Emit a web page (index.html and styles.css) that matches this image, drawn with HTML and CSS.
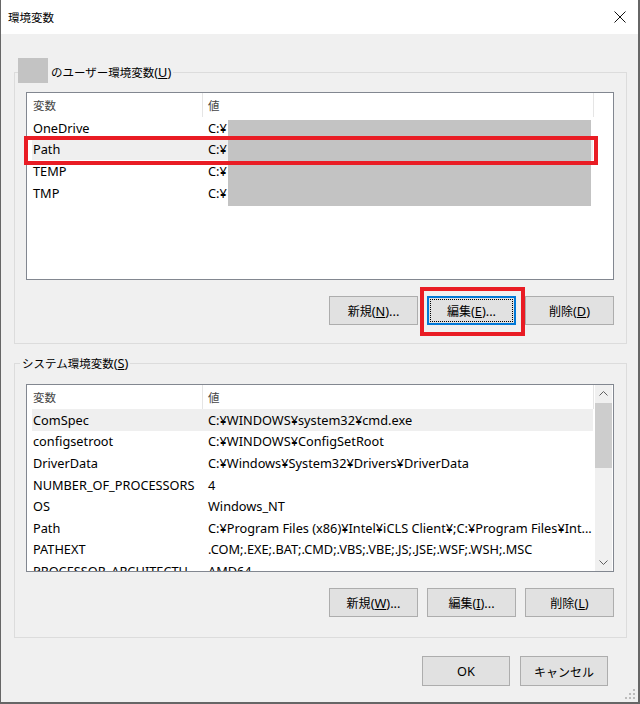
FILE: index.html
```html
<!DOCTYPE html>
<html lang="ja">
<head>
<meta charset="utf-8">
<title>環境変数</title>
<link rel="stylesheet" href="styles.css">
</head>
<body>
<div class="window">
  <div class="titlebar">
    <span class="ja title">環境変数</span>
    <svg class="close" width="12" height="12" viewBox="0 0 12 12"><path d="M0.5 0.5 L11.5 11.5 M11.5 0.5 L0.5 11.5" stroke="#111" stroke-width="1" fill="none"/></svg>
  </div>
  <div class="content">
    <fieldset class="group user">
      <legend><span class="redact-sq"></span><span class="ja">のユーザー環境変数</span>(<u>U</u>)</legend>
      <div class="list-wrap">
        <div class="list">
          <div class="list-head">
            <div class="h-name"><span class="ja">変数</span></div>
            <div class="h-val"><span class="ja">値</span></div>
          </div>
          <div class="row"><div class="c-name">OneDrive</div><div class="c-val">C:¥</div></div>
          <div class="row sel"><div class="c-name">Path</div><div class="c-val">C:¥</div></div>
          <div class="row"><div class="c-name">TEMP</div><div class="c-val">C:¥</div></div>
          <div class="row"><div class="c-name">TMP</div><div class="c-val">C:¥</div></div>
        </div>
        <div class="redact-block"></div>
        <div class="red-path"></div>
      </div>
      <div class="btns">
        <button class="btn"><span class="ja">新規</span>(<u>N</u>)...</button>
        <span class="hl-wrap"><button class="btn focus"><span class="ja">編集</span>(<u>E</u>)...</button></span>
        <button class="btn"><span class="ja">削除</span>(<u>D</u>)</button>
      </div>
    </fieldset>

    <fieldset class="group sys">
      <legend><span class="ja">システム環境変数</span>(<u>S</u>)</legend>
      <div class="list sys-list">
        <div class="main">
          <div class="list-head">
            <div class="h-name"><span class="ja">変数</span></div>
            <div class="h-val"><span class="ja">値</span></div>
          </div>
          <div class="row sel"><div class="c-name">ComSpec</div><div class="c-val">C:¥WINDOWS¥system32¥cmd.exe</div></div>
          <div class="row"><div class="c-name">configsetroot</div><div class="c-val">C:¥WINDOWS¥ConfigSetRoot</div></div>
          <div class="row"><div class="c-name">DriverData</div><div class="c-val">C:¥Windows¥System32¥Drivers¥DriverData</div></div>
          <div class="row"><div class="c-name">NUMBER_OF_PROCESSORS</div><div class="c-val">4</div></div>
          <div class="row"><div class="c-name">OS</div><div class="c-val">Windows_NT</div></div>
          <div class="row"><div class="c-name">Path</div><div class="c-val">C:¥Program Files (x86)¥Intel¥iCLS Client¥;C:¥Program Files¥Int...</div></div>
          <div class="row"><div class="c-name">PATHEXT</div><div class="c-val">.COM;.EXE;.BAT;.CMD;.VBS;.VBE;.JS;.JSE;.WSF;.WSH;.MSC</div></div>
          <div class="row"><div class="c-name">PROCESSOR_ARCHITECTU...</div><div class="c-val">AMD64</div></div>
        </div>
        <div class="scrollbar">
          <div class="sb-btn"><svg width="17" height="17" viewBox="0 0 17 17"><polyline points="4.5,10.5 8.5,6.5 12.5,10.5" stroke="#606060" stroke-width="1" fill="none"/></svg></div>
          <div class="sb-thumb"></div>
          <div class="sb-space"></div>
          <div class="sb-btn"><svg width="17" height="17" viewBox="0 0 17 17"><polyline points="4.5,6.5 8.5,10.5 12.5,6.5" stroke="#606060" stroke-width="1" fill="none"/></svg></div>
        </div>
      </div>
      <div class="btns">
        <button class="btn"><span class="ja">新規</span>(<u>W</u>)...</button>
        <button class="btn"><span class="ja">編集</span>(<u>I</u>)...</button>
        <button class="btn"><span class="ja">削除</span>(<u>L</u>)</button>
      </div>
    </fieldset>

    <div class="footer">
      <button class="btn big">OK</button>
      <button class="btn big"><span class="ja">キャンセル</span></button>
    </div>
  </div>
  <svg class="grip" width="12" height="12" viewBox="0 0 12 12">
    <rect x="8" y="0" width="2" height="2" fill="#bcbcbc"/>
    <rect x="4" y="4" width="2" height="2" fill="#bcbcbc"/>
    <rect x="8" y="4" width="2" height="2" fill="#bcbcbc"/>
    <rect x="0" y="8" width="2" height="2" fill="#bcbcbc"/>
    <rect x="4" y="8" width="2" height="2" fill="#bcbcbc"/>
    <rect x="8" y="8" width="2" height="2" fill="#bcbcbc"/>
  </svg>
</div>
</body>
</html>
```
FILE: styles.css
```css
* { box-sizing: border-box; }
html, body { margin: 0; padding: 0; }
body {
  width: 640px;
  height: 704px;
  overflow: hidden;
  font-family: "Noto Sans", "Noto Sans CJK JP", sans-serif;
  font-size: 12.75px;
  color: #000;
  background: #f0f0f0;
}
.ja {
  font-family: "Noto Sans CJK JP", sans-serif;
  font-size: 11.5px;
}
.window {
  width: 640px;
  height: 704px;
  border-left: 1px solid #666;
  border-right: 2px solid #666;
  border-bottom: 2px solid #666;
  background: #f0f0f0;
  display: flex;
  flex-direction: column;
  position: relative;
}
.titlebar {
  height: 34px;
  background: #fff;
  display: flex;
  align-items: center;
  justify-content: space-between;
  padding: 0 12px 0 7px;
}
.title { font-size: 11.5px; color: #000; }
.close { display: block; }

.content {
  padding: 24px 11px 0 13px;
}
.group {
  margin: 0;
  border: 1px solid #dcdcdc;
  min-width: 0;
}
.group.user { padding: 6px 12px 18px 11px; }
.group.sys { margin-top: 11px; padding: 13px 12px 20px 11px; }
.group legend {
  padding: 0 2px;
  line-height: 16px;
  height: 16px;
  display: flex;
  align-items: center;
  white-space: nowrap;
}
.group.user legend {
  margin-left: -8px;
  padding: 0 2px 0 0;
  height: 28px;
}
.group.sys legend { margin-left: -6px; }
.redact-sq {
  width: 30px;
  height: 25px;
  background: #c3c3c3;
  margin: 0 3px 3px 0;
}

.list-wrap { position: relative; }
.list {
  height: 188px;
  border: 1px solid #828790;
  background: #fff;
  overflow: hidden;
}
.list-head {
  height: 24px;
  display: flex;
  color: #444;
}
.h-name, .h-val {
  height: 24px;
  display: flex;
  align-items: center;
  border-right: 1px solid #e5e5e5;
}
.h-name { width: 176px; padding-left: 6px; }
.h-val { width: 391px; padding-left: 5px; }
.row {
  height: 21.6px;
  display: flex;
  align-items: center;
  margin-left: 5px;
  width: 561px;
  white-space: nowrap;
}
.row.sel { background: #efefef; }
.c-name {
  width: 171px;
  padding-left: 1px;
  padding-right: 2px;
  overflow: hidden;
  text-overflow: ellipsis;
}
.c-val {
  flex: 1;
  padding-left: 5px;
  overflow: hidden;
}
.redact-block {
  position: absolute;
  left: 202px;
  top: 28px;
  width: 363px;
  height: 86px;
  background: #c3c3c3;
}
.red-path {
  position: absolute;
  left: -2px;
  top: 44px;
  width: 574px;
  height: 29px;
  border: 4px solid #e91c24;
}

.sys-list { display: flex; }
.sys-list .main { width: 568px; overflow: hidden; flex: none; }
.scrollbar {
  width: 17px;
  display: flex;
  flex-direction: column;
  background: #f0f0f0;
  flex: none;
}
.sb-btn { height: 17px; }
.sb-btn svg { display: block; }
.sb-thumb { height: 65px; background: #cdcdcd; margin-top: 1px; }
.sb-space { flex: 1; }

.btns {
  display: flex;
  justify-content: flex-end;
  gap: 9px;
  margin-top: 16px;
}
.btn {
  width: 88px;
  height: 29px;
  border: 1px solid #adadad;
  background: #e1e1e1;
  font-family: "Noto Sans", "Noto Sans CJK JP", sans-serif;
  font-size: 12.75px;
  color: #000;
  padding: 0;
  margin: 0;
  display: flex;
  align-items: center;
  justify-content: center;
  white-space: nowrap;
}
.btns .btn { width: 89px; }
.btn .ja { font-size: 12px; }
.btn.big { height: 30px; }
.btn.focus {
  border: 1px solid #0078d7;
  box-shadow: inset 0 0 0 1px #0078d7;
  outline: 1px dotted #000;
  outline-offset: -4px;
}
.hl-wrap { position: relative; display: block; }
.hl-wrap::after {
  content: "";
  position: absolute;
  left: -7px;
  right: -9px;
  top: -9px;
  bottom: -11px;
  border: 4px solid #e91c24;
}

.footer {
  display: flex;
  justify-content: flex-end;
  gap: 10px;
  margin-top: 18px;
  padding-right: 19px;
}
.grip {
  position: absolute;
  right: 1px;
  bottom: 1px;
}
```
